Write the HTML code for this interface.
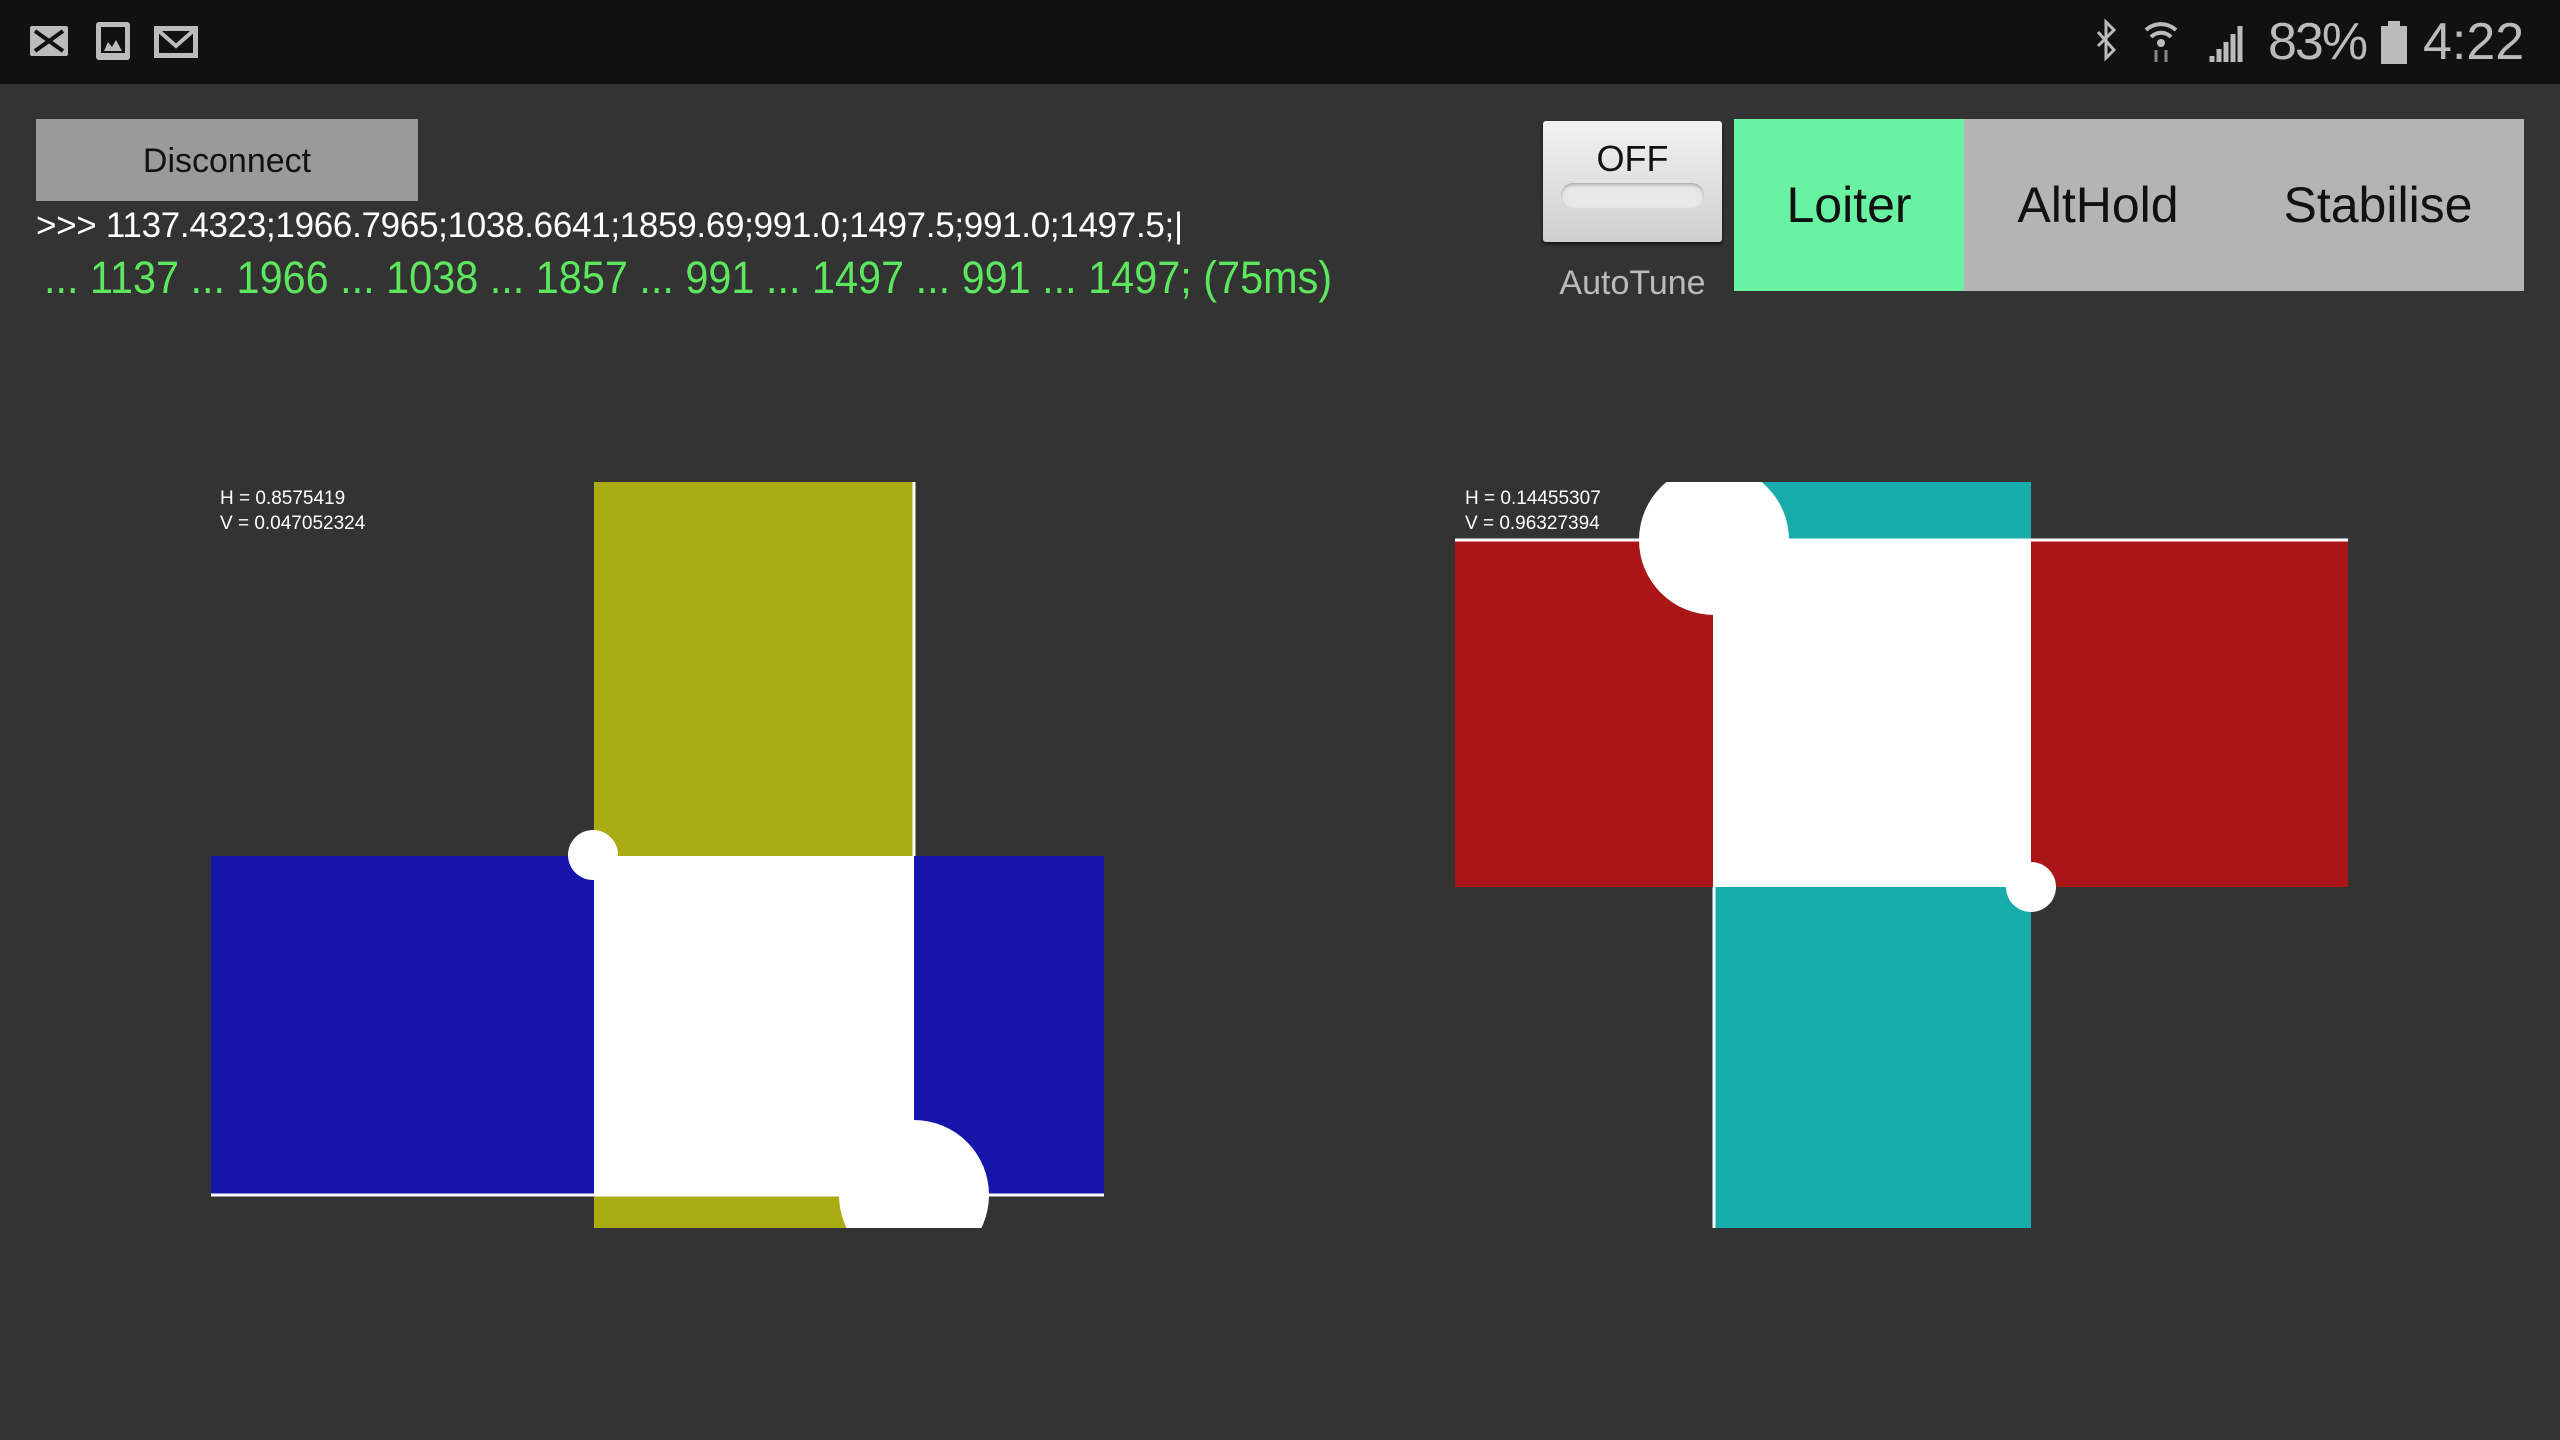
<!DOCTYPE html>
<html><head><meta charset="utf-8"><style>
*{margin:0;padding:0;box-sizing:border-box}
body{width:2560px;height:1440px;background:#333;position:relative;overflow:hidden;font-family:"Liberation Sans",sans-serif}
.a{position:absolute}
.t{position:absolute;white-space:nowrap}
</style></head><body>
<div class="a" style="left:0;top:0;width:2560px;height:84px;background:#111"></div>
<svg class="a" style="left:28px;top:22px" width="180" height="40" viewBox="0 0 180 40">
<rect x="2" y="4" width="38" height="30" rx="2" fill="#bbb"/><path d="M7 9 L35 29 M35 9 L7 29" stroke="#111" stroke-width="4"/>
<rect x="68" y="0" width="34" height="38" rx="3" fill="#bbb"/><rect x="73" y="5" width="24" height="26" fill="#111"/><path d="M76 29 L80 20 L84 25 L88 18 L94 29Z" fill="#bbb"/>
<rect x="126" y="4" width="44" height="32" fill="#bbb"/><rect x="131" y="9" width="34" height="22" fill="#111"/><path d="M131 9 L148 24 L165 9" stroke="#bbb" stroke-width="4" fill="none"/>
</svg>
<svg class="a" style="left:2090px;top:18px" width="180" height="50" viewBox="0 0 180 50">
<path d="M8 14 L24 32 L16 40 L16 4 L24 12 L8 28" stroke="#bbb" stroke-width="3" fill="none"/>
<path d="M56 12 a22 22 0 0 1 30 0" stroke="#bbb" stroke-width="4" fill="none"/>
<path d="M61 19 a14 14 0 0 1 20 0" stroke="#bbb" stroke-width="4" fill="none"/>
<circle cx="71" cy="25" r="4" fill="#bbb"/>
<path d="M66 32 L66 44 M76 44 L76 32" stroke="#888" stroke-width="3"/>
<path d="M122 44 L122 38 M129 44 L129 31 M136 44 L136 24 M143 44 L143 16 M150 44 L150 8" stroke="#bbb" stroke-width="5"/>
</svg>
<div class="t" style="left:2268px;top:12px;font-size:52px;color:#bbb;letter-spacing:-2px">83%</div>
<div class="a" style="left:2381px;top:26px;width:26px;height:38px;background:#bbb"></div>
<div class="a" style="left:2388px;top:21px;width:12px;height:6px;background:#bbb"></div>
<div class="t" style="left:2423px;top:12px;font-size:52px;color:#bbb">4:22</div>

<div class="a" style="left:36px;top:119px;width:382px;height:82px;background:#9a9a9a"></div>
<div class="t" style="left:36px;top:142px;width:382px;text-align:center;font-size:34px;color:#111">Disconnect</div>
<div class="t" style="left:36px;top:206px;font-size:35px;color:#fff;letter-spacing:-0.3px">&gt;&gt;&gt; 1137.4323;1966.7965;1038.6641;1859.69;991.0;1497.5;991.0;1497.5;|</div>
<div class="t" style="left:44px;top:252px;font-size:45px;color:#5de75f;transform:scaleX(0.92);transform-origin:0 0">... 1137 ... 1966 ... 1038 ... 1857 ... 991 ... 1497 ... 991 ... 1497; (75ms)</div>

<div class="a" style="left:1543px;top:121px;width:179px;height:121px;background:linear-gradient(#f2f2f2,#cfcfcf);border-radius:3px;box-shadow:0 2px 3px #111"></div>
<div class="t" style="left:1543px;top:138px;width:179px;text-align:center;font-size:36px;color:#111">OFF</div>
<div class="a" style="left:1561px;top:183px;width:143px;height:25px;border-radius:12px;background:#e8e8e8;box-shadow:inset 0 2px 3px #aaa"></div>
<div class="t" style="left:1543px;top:264px;width:179px;text-align:center;font-size:34px;color:#bbb">AutoTune</div>

<div class="a" style="left:1734px;top:119px;width:790px;height:172px;background:#b4b4b4"></div>
<div class="a" style="left:1734px;top:119px;width:230px;height:172px;background:#69f2a2"></div>
<div class="t" style="left:1734px;top:176px;width:230px;text-align:center;font-size:50px;color:#111">Loiter</div>
<div class="t" style="left:1964px;top:176px;width:268px;text-align:center;font-size:50px;color:#111">AltHold</div>
<div class="t" style="left:2232px;top:176px;width:292px;text-align:center;font-size:50px;color:#111">Stabilise</div>

<svg class="a" style="left:0;top:0" width="2560" height="1440">
<defs><clipPath id="c1"><rect x="0" y="0" width="2560" height="1228"/></clipPath>
<clipPath id="c2"><rect x="0" y="482" width="2560" height="1000"/></clipPath></defs>
<rect x="594" y="482" width="320" height="746" fill="#abab14"/>
<rect x="211" y="856" width="893" height="339" fill="#1515aa"/>
<rect x="594" y="856" width="320" height="339" fill="#fff"/>
<line x1="914" y1="482" x2="914" y2="856" stroke="#fff" stroke-width="3"/>
<line x1="211" y1="1195" x2="1104" y2="1195" stroke="#fff" stroke-width="3"/>
<circle cx="914" cy="1195" r="75" fill="#fff" clip-path="url(#c1)"/>
<circle cx="593" cy="855" r="25" fill="#fff"/>

<rect x="1713" y="482" width="318" height="746" fill="#17abab"/>
<rect x="1455" y="540" width="893" height="347" fill="#aa1515"/>
<rect x="1713" y="540" width="318" height="347" fill="#fff"/>
<line x1="1455" y1="540" x2="2348" y2="540" stroke="#fff" stroke-width="3"/>
<line x1="1714" y1="887" x2="1714" y2="1228" stroke="#fff" stroke-width="3"/>
<circle cx="1714" cy="540" r="75" fill="#fff" clip-path="url(#c2)"/>
<circle cx="2031" cy="887" r="25" fill="#fff"/>
</svg>
<div class="t" style="left:220px;top:486px;font-size:19px;line-height:25px;color:#fff">H = 0.8575419<br>V = 0.047052324</div>
<div class="t" style="left:1465px;top:486px;font-size:19px;line-height:25px;color:#fff">H = 0.14455307<br>V = 0.96327394</div>
</body></html>
